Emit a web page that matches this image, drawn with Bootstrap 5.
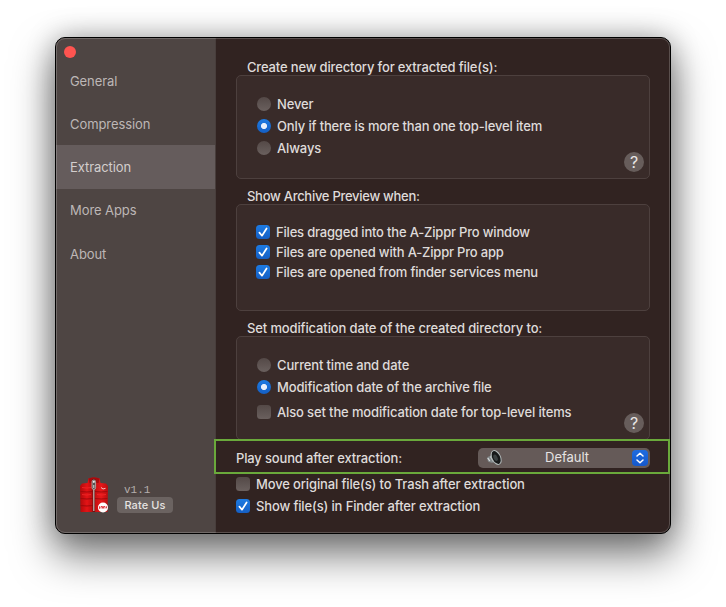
<!DOCTYPE html>
<html lang="en">
<head>
<meta charset="utf-8">
<meta name="viewport" content="width=device-width, initial-scale=1">
<title>A-Zippr Pro Preferences</title>
<link href="https://cdn.jsdelivr.net/npm/bootstrap@5.3.0/dist/css/bootstrap.min.css" rel="stylesheet">
<style>
body{background:#fff;font-family:Inter,"Liberation Sans",sans-serif;font-size:13px;font-weight:500;line-height:20px;letter-spacing:-.16px;color:#dfdbda;overflow:hidden;height:607px}
.prefs{width:616px;height:497px;margin:37px 0 0 55px;border:1px solid #000;border-radius:10px;background:#312321;box-shadow:0 20px 40px 2px rgba(0,0,0,.5),0 0 28px rgba(0,0,0,.28);position:relative}
.prefs::after{content:"";position:absolute;inset:0;border:1px solid rgba(255,255,255,.2);border-radius:9px;pointer-events:none}
.side{width:160px;background:#4e4543;border-radius:9px 0 0 9px;border-right:1px solid #483e3c;color:#bdb7b6;font-weight:400;letter-spacing:-.08px}
.close-dot{width:12px;height:12px;background:#fe5450;margin:8px 0 0 8px}
.side-nav{margin-top:1px}
.side .nav-link{height:43px;padding:1px 14px 0;color:inherit;line-height:43px;border-radius:0}
.side .nav-link.active{background:#655c5c;color:#d3cecd;height:44px}
.side .nav-link.active + .nav-link{padding-top:0}
.about-app{padding:0 0 20px 23px;gap:8px}
.rate{height:16px;width:56px;background:#6b6361;border-radius:4px;font-size:11px;line-height:16px;color:#e6e3e2;font-weight:500;padding:0;border:0;letter-spacing:.1px}
.ver{font:11px/14px "Liberation Mono",monospace;color:#b5afad;padding-left:7px;letter-spacing:0}
.pane{padding:19px 20px 0}
.group-title{padding-left:11px;height:18px}
.title-preview{letter-spacing:-.28px}
.title-date{letter-spacing:-.13px}
.group{border:1px solid #4d403e;border-radius:5px;background:#392b29;position:relative;padding-left:20px}
.group-dir{height:104px;padding-top:17px;margin-bottom:7px}
.group-preview{height:107px;padding:17px 0 0 19px;margin-bottom:7px}
.group-date{height:104px;padding-top:17px}
.help{position:absolute;right:5px;bottom:6px;width:20px;height:20px;border-radius:50%;background:#675d5b;font-size:16px;line-height:20px;text-align:center;color:#e8e5e4;letter-spacing:0;padding:0;border:0}
.opt{height:22px;gap:6px;letter-spacing:-.14px}
.group-preview .opt{height:20px;letter-spacing:-.19px}
.group-date .opt:nth-of-type(3){height:28px}
.opt input{width:14px;height:14px;margin:0;border:0;background-color:transparent;background-image:linear-gradient(#544947,#6a605e);flex:none}
.opt input[type=checkbox]{border-radius:3.5px}
.opt input[type=radio]:checked{background:radial-gradient(circle,#e6effb 0 2.7px,transparent 3.4px),linear-gradient(#1d7be3,#155fc4)}
.opt input[type=checkbox]:checked{background:url("data:image/svg+xml,%3Csvg xmlns='http://www.w3.org/2000/svg' viewBox='0 0 14 14'%3E%3Cpath d='M3.4 7.6 6 10.7 10.6 3.5' fill='none' stroke='%23fff' stroke-width='1.7' stroke-linecap='round' stroke-linejoin='round'/%3E%3C/svg%3E"),linear-gradient(#1d7be3,#155fc4)}
.sound{margin:-1px -20px -1px -22px;height:35px;border:2px solid #6aa93b;padding:2px 18px 0 20px;background:#312321;position:relative;z-index:1}
.popup{width:172px;height:20px;background:#655a58;border-radius:5px;color:#e6e3e2;padding:0 2px 0 8px;border:0;letter-spacing:-.05px}
.popup-label{padding:0 1px 2px 0}
.stepper{width:16px;height:16px;border-radius:4px;background:linear-gradient(#1f6ce0,#1558cb)}
</style>
</head>
<body>
<main class="prefs d-flex">
  <aside class="side d-flex flex-column">
    <div class="close-dot rounded-circle"></div>
    <nav class="nav side-nav flex-column">
      <a class="nav-link" href="#">General</a>
      <a class="nav-link" href="#">Compression</a>
      <a class="nav-link active" href="#">Extraction</a>
      <a class="nav-link" href="#">More Apps</a>
      <a class="nav-link" href="#">About</a>
    </nav>
    <div class="about-app d-flex align-items-end mt-auto">
      <svg width="30" height="36" viewBox="0 0 30 36" aria-hidden="true">
        <defs><linearGradient id="vest" x1="0" x2="1"><stop offset="0" stop-color="#b00a0c"/><stop offset=".25" stop-color="#e41416"/><stop offset=".45" stop-color="#b80c0e"/><stop offset=".75" stop-color="#e8181a"/><stop offset="1" stop-color="#b80c0e"/></linearGradient></defs>
        <path d="M9.500 1.500Q15 -.5 20.500 1.500L21.500 6 27 6.500 29 9 28.500 35H1.500L1 9 3 6.500 8.500 6Z" fill="url(#vest)"/>
        <path d="M9.500 1.500Q15 -.5 20.500 1.500L19.500 6H10.500Z" fill="#a80a0c"/>
        <path d="M1.500 14.500Q8 15.500 14 14.500M16 14.500Q22 15.500 28.500 14.500M1.500 21.500Q8 22.500 14 21.500M16 21.500Q22 22.500 28.500 21.500M1.500 28.500Q8 29.500 14 28.500" fill="none" stroke="#a0090b" stroke-width="1"/>
        <path d="M3 10.500Q8 11.500 12 10.500M3 17.500Q8 18.500 12 17.500M18 17.500Q23 18.500 27 17.500" fill="none" stroke="#f4282a" stroke-width=".8"/>
        <path d="M14.800 12V35" stroke="#6b1513" stroke-width="2.600"/>
        <path d="M14.800 12V34" stroke="#c9bab7" stroke-width="1.200"/>
        <path d="M14.800 2v3" stroke="#5b1512" stroke-width="3"/>
        <rect x="13" y="3" width="3.600" height="9.500" rx="1.800" fill="#5a504f" stroke="#bab4b2" stroke-width=".8"/>
        <circle cx="14.800" cy="4.800" r="1.100" fill="#eee"/><path d="M14.800 8v3" stroke="#ddd"/>
        <path d="M22 10.500l2 1.500 2.500-.7" stroke="#f6c4c4" stroke-width="1" fill="none"/>
        <circle cx="24" cy="30.500" r="5" fill="#fff"/>
        <path d="M20.500 29.300v2.500M22 31.500v-2h1.500v2M24.500 31.500v-2H26v2M27.500 29.300v2" stroke="#df2832" stroke-width=".9" fill="none"/>
      </svg>
      <div>
        <div class="ver">v1.1</div>
        <button class="btn rate d-block" type="button">Rate Us</button>
      </div>
    </div>
  </aside>
  <section class="pane flex-grow-1">
    <div class="group-title">Create new directory for extracted file(s):</div>
    <div class="group group-dir">
      <label class="opt d-flex align-items-center"><input class="form-check-input" type="radio" name="dir">Never</label>
      <label class="opt d-flex align-items-center"><input class="form-check-input" type="radio" name="dir" checked>Only if there is more than one top-level item</label>
      <label class="opt d-flex align-items-center"><input class="form-check-input" type="radio" name="dir">Always</label>
      <button class="help" type="button">?</button>
    </div>
    <div class="group-title title-preview">Show Archive Preview when:</div>
    <div class="group group-preview">
      <label class="opt d-flex align-items-center"><input class="form-check-input" type="checkbox" checked>Files dragged into the A-Zippr Pro window</label>
      <label class="opt d-flex align-items-center"><input class="form-check-input" type="checkbox" checked>Files are opened with A-Zippr Pro app</label>
      <label class="opt d-flex align-items-center"><input class="form-check-input" type="checkbox" checked>Files are opened from finder services menu</label>
    </div>
    <div class="group-title title-date">Set modification date of the created directory to:</div>
    <div class="group group-date">
      <label class="opt d-flex align-items-center"><input class="form-check-input" type="radio" name="date">Current time and date</label>
      <label class="opt d-flex align-items-center"><input class="form-check-input" type="radio" name="date" checked>Modification date of the archive file</label>
      <label class="opt d-flex align-items-center"><input class="form-check-input" type="checkbox">Also set the modification date for top-level items</label>
      <button class="help" type="button">?</button>
    </div>
    <div class="sound d-flex align-items-center justify-content-between">
      <span>Play sound after extraction:</span>
      <button class="popup d-flex align-items-center" type="button">
        <svg width="17" height="17" viewBox="0 0 17 17" aria-hidden="true">
          <path d="M1 9Q1.500 7.500 4 7L6.500 2 13 15.500 7.500 13.500Q4 14 2 12.500Z" fill="#83898b"/>
          <path d="M1.800 9l2 3M4.500 7.500l3 5" stroke="#d9dddd" stroke-width="1.200"/>
          <ellipse cx="10.200" cy="8.500" rx="4.300" ry="7.400" transform="rotate(-26 10.200 8.500)" fill="#17191a" stroke="#b4bbbb" stroke-width="1"/>
          <ellipse cx="9.600" cy="8.800" rx="1.900" ry="3.400" transform="rotate(-26 9.600 8.800)" fill="#3b4142"/>
        </svg>
        <span class="popup-label flex-grow-1 text-center">Default</span>
        <span class="stepper d-flex">
          <svg width="16" height="16" viewBox="0 0 16 16" fill="none" stroke="#fff" stroke-width="1.500" stroke-linecap="round" stroke-linejoin="round" aria-hidden="true"><path d="M5 6 8 3.200 11 6M5 10 8 12.800 11 10"/></svg>
        </span>
      </button>
    </div>
    <label class="opt d-flex align-items-center"><input class="form-check-input" type="checkbox">Move original file(s) to Trash after extraction</label>
    <label class="opt d-flex align-items-center"><input class="form-check-input" type="checkbox" checked>Show file(s) in Finder after extraction</label>
  </section>
</main>
<script src="https://cdn.jsdelivr.net/npm/bootstrap@5.3.0/dist/js/bootstrap.bundle.min.js"></script>
</body>
</html>
